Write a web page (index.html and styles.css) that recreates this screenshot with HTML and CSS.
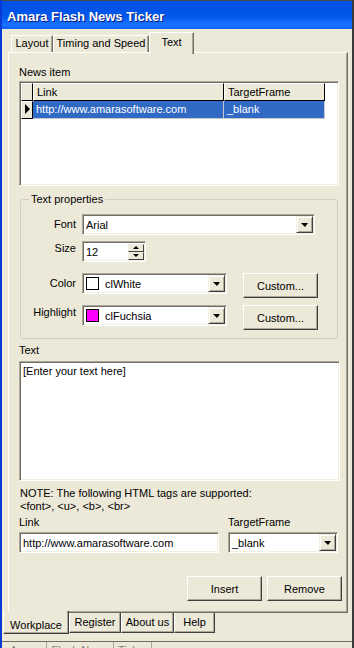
FILE: index.html
```html
<!DOCTYPE html>
<html lang="en">
<head>
    <meta charset="UTF-8">
    <meta name="viewport" content="width=device-width, initial-scale=1.0">
    <title>Amara Flash News Ticker</title>
    <link rel="stylesheet" href="styles.css">
</head>
<body>
    <div class="window">
        <div class="titlebar">Amara Flash News Ticker</div>

        <div class="client">
            <!-- 上方页签 -->
            <div class="tabs-top">
                <div class="tab tab-layout">Layout</div>
                <div class="tab tab-timing">Timing and Speed</div>
                <div class="tab tab-text active">Text</div>
            </div>

            <div class="sheet">
                <div class="label">News item</div>
                <div class="grid">
                    <div class="grid-row head">
                        <div class="cell fixed"></div>
                        <div class="cell link">Link</div>
                        <div class="cell target">TargetFrame</div>
                    </div>
                    <div class="grid-row selected">
                        <div class="cell fixed"><span class="arrow"></span></div>
                        <div class="cell link">http://www.amarasoftware.com</div>
                        <div class="cell target">_blank</div>
                    </div>
                </div>

                <!-- 文字属性 -->
                <fieldset class="group">
                    <legend>Text properties</legend>
                    <div class="prop-row row-font">
                        <label>Font</label>
                        <div class="combo combo-font">
                            <span class="value">Arial</span>
                            <span class="drop"><i class="down"></i></span>
                        </div>
                    </div>
                    <div class="prop-row row-size">
                        <label>Size</label>
                        <div class="combo spin">
                            <span class="value">12</span>
                            <span class="spin-btns">
                                <span class="spin-btn"><i class="up"></i></span>
                                <span class="spin-btn"><i class="down small"></i></span>
                            </span>
                        </div>
                    </div>
                    <div class="prop-row row-color">
                        <label>Color</label>
                        <div class="combo combo-color">
                            <span class="swatch swatch-white"></span>
                            <span class="value">clWhite</span>
                            <span class="drop"><i class="down"></i></span>
                        </div>
                        <button class="btn btn-custom">Custom...</button>
                    </div>
                    <div class="prop-row row-highlight">
                        <label>Highlight</label>
                        <div class="combo combo-color">
                            <span class="swatch swatch-fuchsia"></span>
                            <span class="value">clFuchsia</span>
                            <span class="drop"><i class="down"></i></span>
                        </div>
                        <button class="btn btn-custom">Custom...</button>
                    </div>
                </fieldset>

                <div class="label label-text">Text</div>
                <div class="memo">[Enter your text here]</div>

                <div class="note">
                    NOTE: The following HTML tags are supported:<br>
                    &lt;font&gt;, &lt;u&gt;, &lt;b&gt;, &lt;br&gt;
                </div>

                <div class="link-row">
                    <div class="link-col">
                        <div class="label">Link</div>
                        <div class="combo edit"><span class="value">http://www.amarasoftware.com</span></div>
                    </div>
                    <div class="target-col">
                        <div class="label">TargetFrame</div>
                        <div class="combo">
                            <span class="value">_blank</span>
                            <span class="drop"><i class="down"></i></span>
                        </div>
                    </div>
                </div>

                <div class="actions">
                    <button class="btn">Insert</button>
                    <button class="btn">Remove</button>
                </div>
            </div>

            <!-- 下方页签 -->
            <div class="tabs-bottom">
                <div class="btab active tab-workplace">Workplace</div>
                <div class="btab tab-register">Register</div>
                <div class="btab tab-about">About us</div>
                <div class="btab tab-help">Help</div>
            </div>

            <div class="statusbar">
                <span class="panel">Amara</span>
                <span class="panel">Flash News</span>
                <span class="panel">Ticker</span>
            </div>
        </div>
    </div>
</body>
</html>
```

FILE: styles.css
```css
/* 全局 */
body {
    margin: 0;
    font-family: "Liberation Sans", Arial, sans-serif;
    font-size: 11px;
    color: #000;
    background: #fff;
}

.window {
    width: 354px;
    height: 648px;
    box-sizing: border-box;
    overflow: hidden;
    background: #ece9d8;
    border-left: 2px solid #0a3ad6;
    border-right: 2px solid #3a3a3a;
    display: flex;
    flex-direction: column;
}

/* 标题栏 */
.titlebar {
    height: 25px;
    padding: 3px 0 0 5px;
    line-height: 25px;
    border-top: 1px solid #4a4a4a;
    background: linear-gradient(#0050e0, #0058ec 55%, #1a72ff 85%, #0b60f0);
    color: #fff;
    font-size: 13px;
    font-weight: bold;
    text-shadow: 1px 1px #0a1883;
    white-space: nowrap;
}

.client {
    flex: 1;
    display: flex;
    flex-direction: column;
}

/* 上方页签 */
.tabs-top {
    display: flex;
    align-items: flex-end;
    height: 20px;
    margin: 3px 0 0 9px;
}
.tab {
    box-sizing: border-box;
    height: 17px;
    line-height: 15px;
    text-align: center;
    border-top: 1px solid #fff;
    border-left: 1px solid #fff;
    border-right: 1px solid #716f64;
    box-shadow: inset -1px 0 #aca899;
    white-space: nowrap;
}
.tab-layout { width: 42px; }
.tab-timing { width: 96px; }
.tab-text { width: 45px; }
.tab.active {
    position: relative;
    z-index: 1;
    height: 22px;
    margin-bottom: -2px;
    line-height: 18px;
    background: #ece9d8;
}

/* 页面 */
.sheet {
    margin: 0 4px 0 6px;
    padding: 0 5px 11px 10px;
    border: 1px solid;
    border-color: #fff #716f64 #716f64 #fff;
    box-shadow: inset -1px -1px #aca899;
}
.label {
    line-height: 13px;
    margin-top: 13px;
    white-space: nowrap;
}

/* 表格 */
.grid {
    margin-top: 2px;
    width: 320px;
    height: 105px;
    box-sizing: border-box;
    padding: 1px;
    background: #fff;
    border: 1px solid;
    border-color: #aca899 #fff #fff #aca899;
    box-shadow: inset 1px 1px #716f64, inset -1px -1px #f1efe2;
}
.grid-row {
    display: flex;
    height: 18px;
}
.cell {
    box-sizing: border-box;
    height: 18px;
    line-height: 16px;
    padding-left: 3px;
    white-space: nowrap;
    overflow: hidden;
}
.cell.fixed { width: 12px; padding: 0; }
.cell.link { width: 191px; }
.cell.target { width: 101px; }
.head .cell,
.cell.fixed {
    background: #ece9d8;
    border-top: 1px solid #fff;
    border-left: 1px solid #fff;
    border-right: 1px solid #000;
    border-bottom: 1px solid #000;
}
.selected .link,
.selected .target {
    background: #316ac5;
    color: #fff;
    border-right: 1px solid #c8c8c8;
    border-bottom: 1px solid #c8c8c8;
    line-height: 17px;
}
.arrow {
    display: block;
    width: 0;
    height: 0;
    margin: 2px 0 0 3px;
    border-left: 5px solid #000;
    border-top: 5px solid transparent;
    border-bottom: 5px solid transparent;
}

/* 分组框 */
.group {
    margin: 7px 0 0 1px;
    padding: 0 0 8px 0;
    width: 318px;
    box-sizing: border-box;
    min-width: 0;
    border: 1px solid #d0d0bf;
    border-radius: 3px;
}
.group legend {
    margin-left: 8px;
    padding: 0 2px;
    line-height: 13px;
}
.prop-row {
    display: flex;
    align-items: flex-start;
}
.prop-row label {
    width: 55px;
    margin-right: 6px;
    text-align: right;
    line-height: 20px;
    white-space: nowrap;
}
.row-font { margin-top: 8px; }
.row-size { margin-top: 6px; }
.row-color { margin-top: 11px; }
.row-highlight { margin-top: 7px; }
.row-size label,
.row-highlight label { line-height: 15px; }

/* 输入框 / 下拉框 */
.combo {
    box-sizing: border-box;
    height: 21px;
    display: flex;
    align-items: center;
    background: #fff;
    border: 1px solid;
    border-color: #aca899 #fff #fff #aca899;
    box-shadow: inset 1px 1px #716f64, inset -1px -1px #f1efe2;
    white-space: nowrap;
    overflow: hidden;
}
.combo .value {
    flex: 1;
    padding-left: 3px;
}
.combo-font { width: 233px; }
.combo-color { width: 145px; }
.spin { width: 64px; }
.drop {
    box-sizing: border-box;
    width: 17px;
    height: 17px;
    margin-right: 1px;
    display: flex;
    align-items: center;
    justify-content: center;
    background: #ece9d8;
    border: 1px solid;
    border-color: #f1efe2 #404040 #404040 #f1efe2;
    box-shadow: inset 1px 1px #fff, inset -1px -1px #aca899;
}
.down {
    display: block;
    width: 0;
    height: 0;
    border-left: 4px solid transparent;
    border-right: 3px solid transparent;
    border-top: 4px solid #000;
}
.up {
    display: block;
    width: 0;
    height: 0;
    border-left: 3px solid transparent;
    border-right: 3px solid transparent;
    border-bottom: 3px solid #000;
}
.down.small {
    border-left-width: 3px;
    border-top-width: 3px;
}
.spin-btns {
    display: flex;
    flex-direction: column;
    margin-right: 1px;
}
.spin-btn {
    box-sizing: border-box;
    width: 16px;
    height: 8px;
    display: flex;
    align-items: center;
    justify-content: center;
    background: #ece9d8;
    border: 1px solid;
    border-color: #f1efe2 #404040 #404040 #f1efe2;
}
.swatch {
    width: 13px;
    height: 13px;
    box-sizing: border-box;
    margin-left: 3px;
    border: 1px solid #000;
}
.swatch-white { background: #fff; }
.swatch-fuchsia { background: #ff00ff; }
.combo-color .value { padding-left: 6px; }

/* 按钮 */
.btn {
    box-sizing: border-box;
    width: 75px;
    height: 25px;
    padding: 0;
    font-family: inherit;
    font-size: 11px;
    color: #000;
    background: #ece9d8;
    border: 1px solid;
    border-color: #fff #404040 #404040 #fff;
    box-shadow: inset -1px -1px #aca899;
}
.btn-custom { margin-left: 16px; }

/* 文本区 */
.label-text { margin-top: 5px; }
.memo {
    margin-top: 4px;
    width: 321px;
    height: 120px;
    box-sizing: border-box;
    padding: 2px 3px;
    line-height: 14px;
    background: #fff;
    border: 1px solid;
    border-color: #aca899 #fff #fff #aca899;
    box-shadow: inset 1px 1px #716f64, inset -1px -1px #f1efe2;
}
.note {
    margin-top: 6px;
    line-height: 13px;
    margin-left: 1px;
}
.link-row {
    display: flex;
}
.link-row .label { margin-top: 3px; }
.link-row .combo { margin-top: 3px; }
.link-col { width: 200px; }
.target-col { width: 110px; margin-left: 9px; }

.actions {
    display: flex;
    justify-content: flex-end;
    gap: 5px;
    margin-top: 23px;
}

/* 下方页签 */
.tabs-bottom {
    display: flex;
    align-items: flex-start;
    margin-left: 1px;
}
.btab {
    box-sizing: border-box;
    height: 20px;
    padding-top: 2px;
    line-height: 14px;
    text-align: center;
    border-left: 1px solid #fff;
    border-right: 1px solid #404040;
    border-bottom: 1px solid #404040;
    box-shadow: inset -1px -1px #aca899;
    white-space: nowrap;
}
.btab.active {
    position: relative;
    z-index: 1;
    height: 23px;
    margin-top: -2px;
    padding-top: 8px;
    line-height: 13px;
    background: #ece9d8;
}
.tab-workplace { width: 66px; }
.tab-register { width: 52px; }
.tab-about { width: 53px; }
.tab-help { width: 41px; }

/* 状态栏 */
.statusbar {
    margin-top: 7px;
    padding-left: 4px;
    display: flex;
    border-top: 1px solid #716f64;
    height: 18px;
    color: #808080;
}
.statusbar .panel {
    padding: 1px 4px 0;
    border-right: 1px solid #aca899;
    line-height: 14px;
}
```
